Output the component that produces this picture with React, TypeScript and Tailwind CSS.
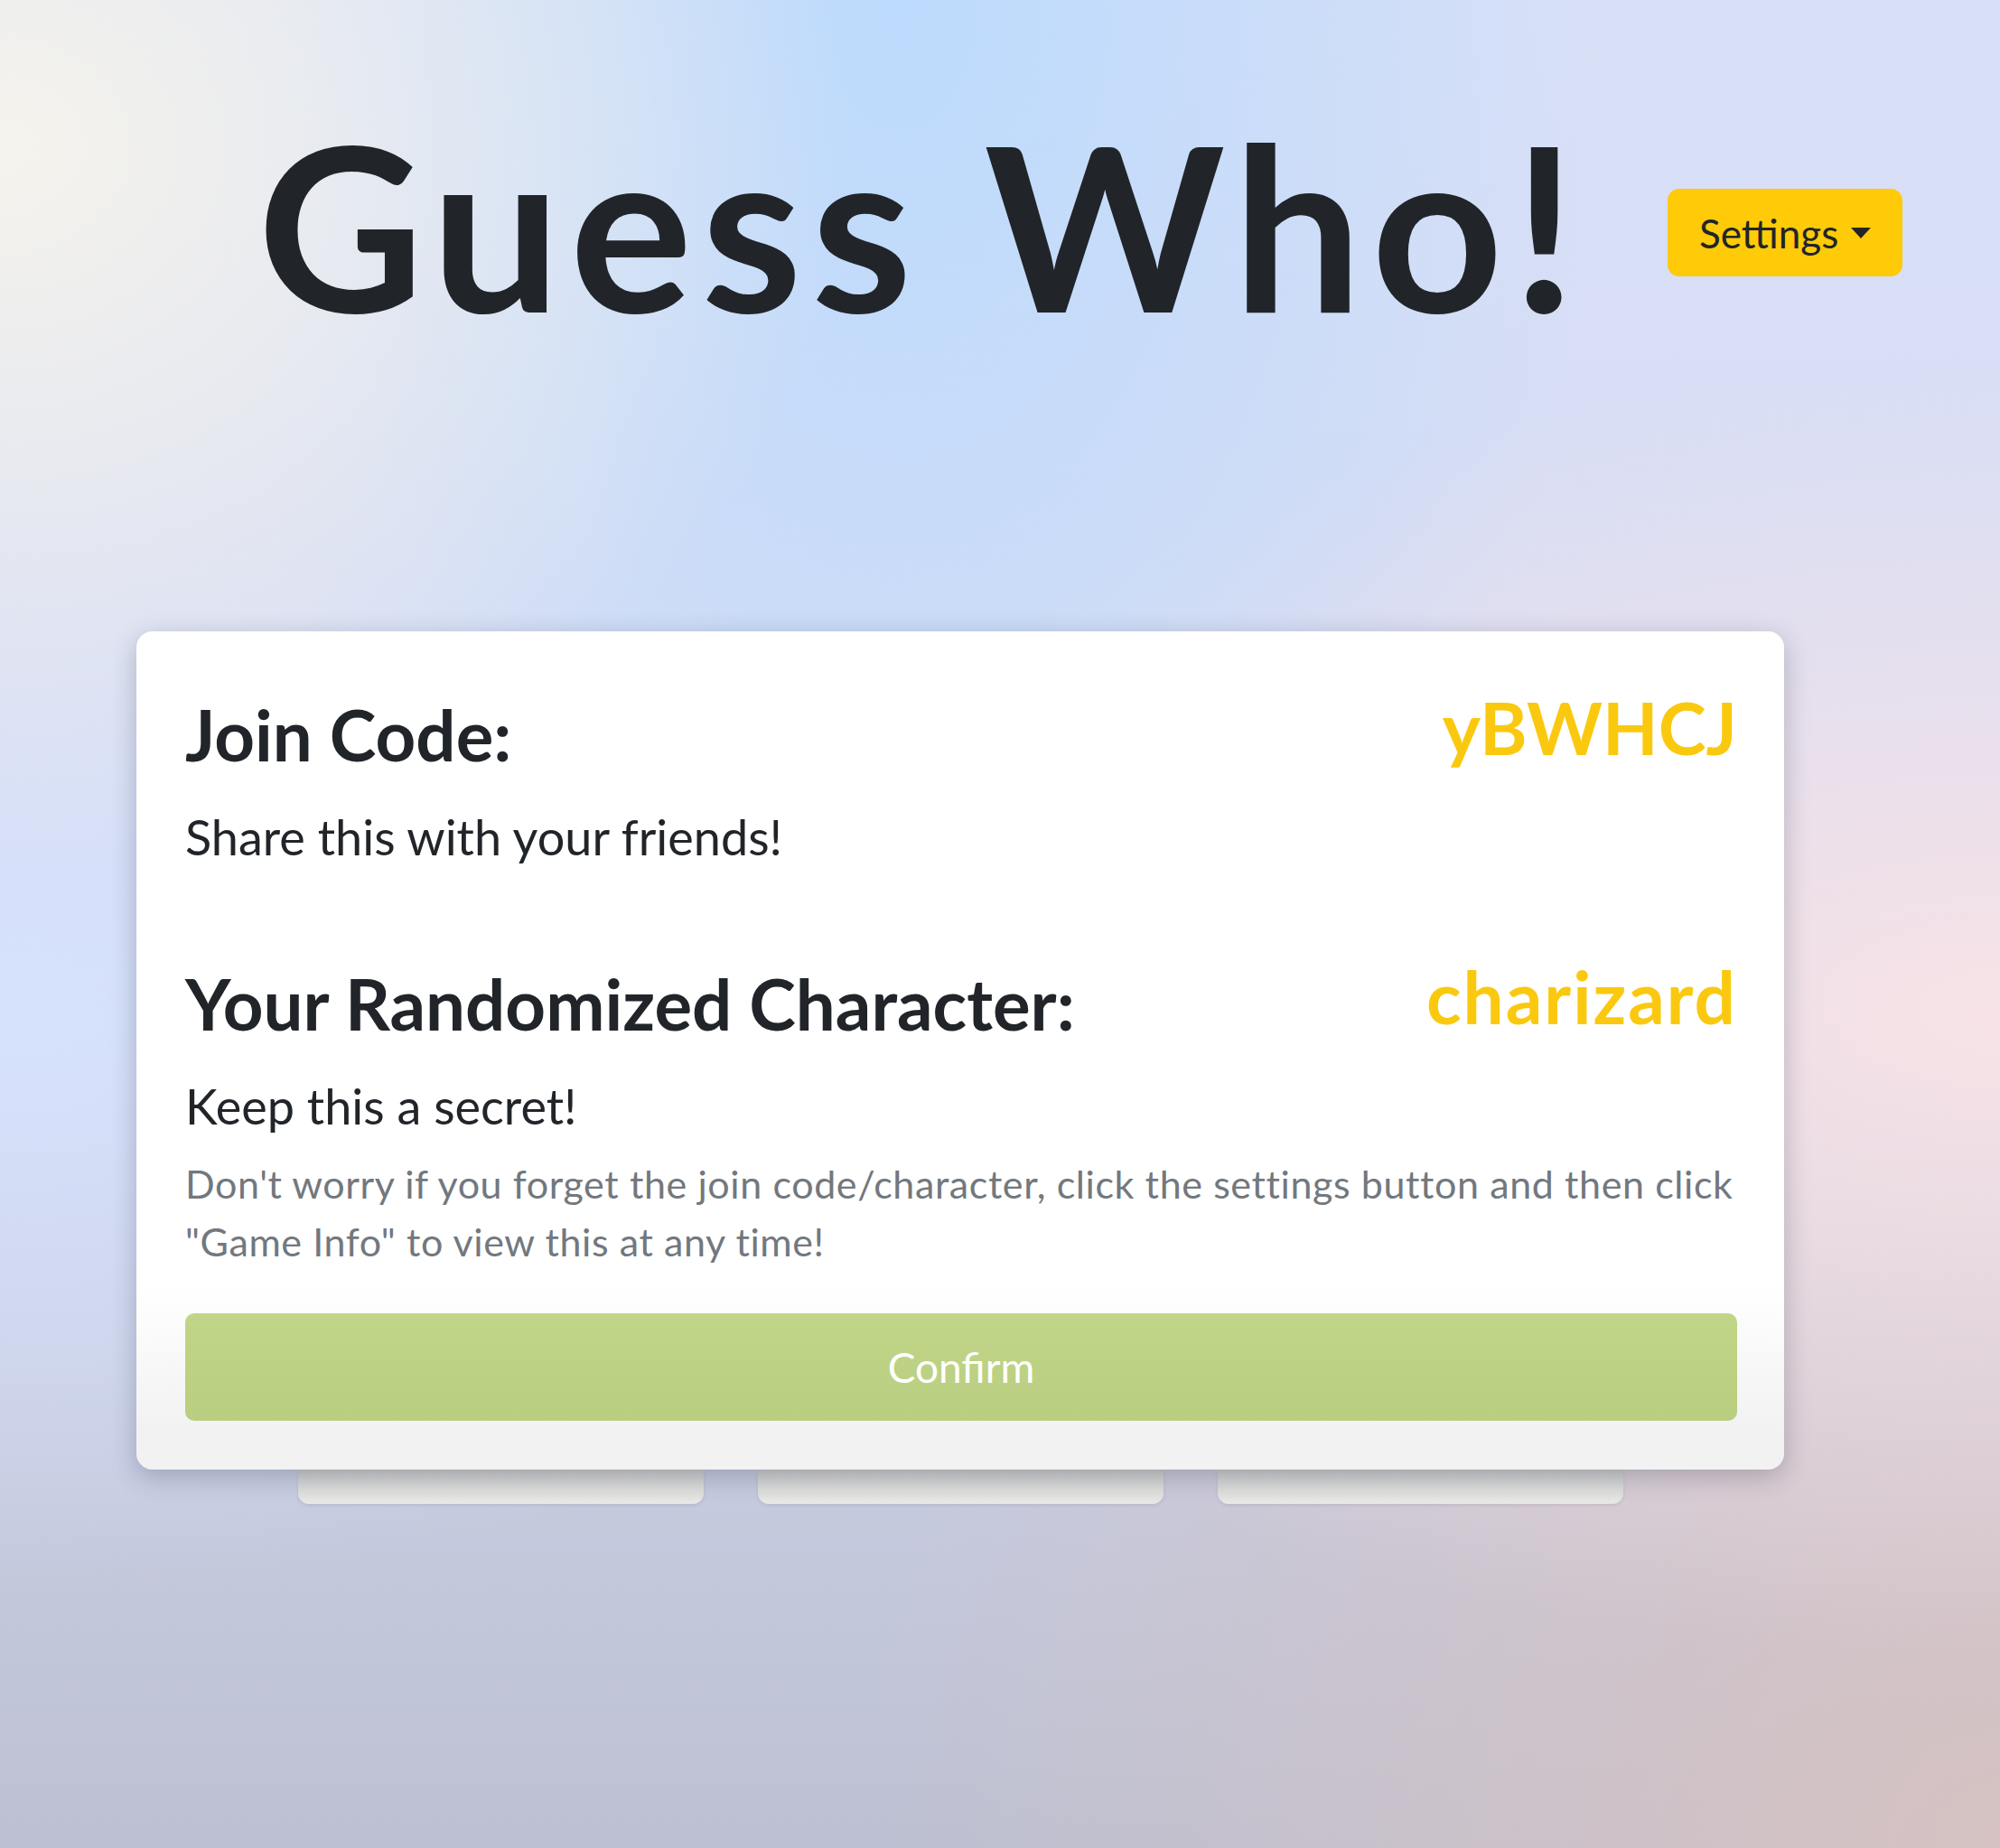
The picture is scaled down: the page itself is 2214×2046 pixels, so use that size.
const page =
  'min-h-[2046px] w-full overflow-hidden font-["Lato",sans-serif] text-[#212529] ' +
  'bg-[radial-gradient(ellipse_at_0%_8%,#f5f3ec_0%,rgba(245,243,236,0)_30%),radial-gradient(ellipse_at_45%_0%,#bcdafc_0%,rgba(188,218,252,0)_45%),radial-gradient(ellipse_at_100%_55%,#f7e3e7_0%,rgba(247,227,231,0)_45%),radial-gradient(ellipse_at_100%_100%,#d6c2c2_0%,rgba(214,194,194,0)_40%),radial-gradient(ellipse_at_0%_55%,#d6e1fb_0%,rgba(214,225,251,0)_40%),linear-gradient(to_bottom,#d8e0f7_0%,#d6dbf2_50%,#bcc0d2_100%)]';

function Settings() {
  return (
    <button className="mr-[108px] ml-auto mt-[88px] flex h-[97px] w-[260px] items-center justify-between rounded-[13px] bg-[#ffca08] px-[35px] text-[44px] leading-none text-[#212529]">
      <span>Settings</span>
      <span className="h-0 w-0 border-x-[11px] border-t-[12px] border-x-transparent border-t-[#212529]" />
    </button>
  );
}

export default function App() {
  return (
    <div className={page}>
      <header className="flex items-start pt-[121px]">
        <h1 className="pl-[285px] text-[254px] font-bold leading-[254px] tracking-[10px] text-[#212529]">
          Guess Who!
        </h1>
        <Settings />
      </header>

      <div className="ml-[151px] mt-[324px] flex w-[1824px] flex-col">
        <div className="relative z-10 rounded-[18px] bg-[linear-gradient(to_bottom,#ffffff_78%,#f2f2f2_95%)] pb-[54px] pl-[54px] pr-[52px] pt-[67px] shadow-[0_8px_28px_rgba(40,45,70,0.28)]">
          <div className="flex items-start justify-between">
            <div>
              <h2 className="text-[78px] font-bold leading-[94px]">Join Code:</h2>
              <p className="mt-[32px] text-[54px] leading-[70px]">Share this with your friends!</p>
            </div>
            <div className="text-[80px] font-bold leading-[78px] text-[#fac90f]">yBWHCJ</div>
          </div>

          <div className="mt-[102px] flex items-start justify-between">
            <h2 className="text-[78px] font-bold leading-[94px]">Your Randomized Character:</h2>
            <div className="text-[80px] font-bold leading-[78px] tracking-[2px] text-[#fac90f]">charizard</div>
          </div>
          <p className="mt-[32px] text-[54px] leading-[70px]">Keep this a secret!</p>
          <p className="mt-[19px] text-[43px] leading-[64px] tracking-[0.6px] text-[#72787e]">
            Don't worry if you forget the join code/character, click the settings button and then click
            <br />
            "Game Info" to view this at any time!
          </p>

          <button className="mt-[47px] flex h-[119px] w-full items-center justify-center rounded-[10px] bg-[linear-gradient(to_bottom,#c1d588,#b9ce80)] text-[46px] text-white">
            Confirm
          </button>
        </div>

        <div className="flex justify-center gap-[60px]">
          {[0, 1, 2].map((i) => (
            <div
              key={i}
              className="h-[38px] w-[449px] rounded-b-[12px] bg-[linear-gradient(to_bottom,#cdcdcd,#e9e9e7)] shadow-[0_2px_4px_rgba(0,0,0,0.08)]"
            />
          ))}
        </div>
      </div>
    </div>
  );
}
